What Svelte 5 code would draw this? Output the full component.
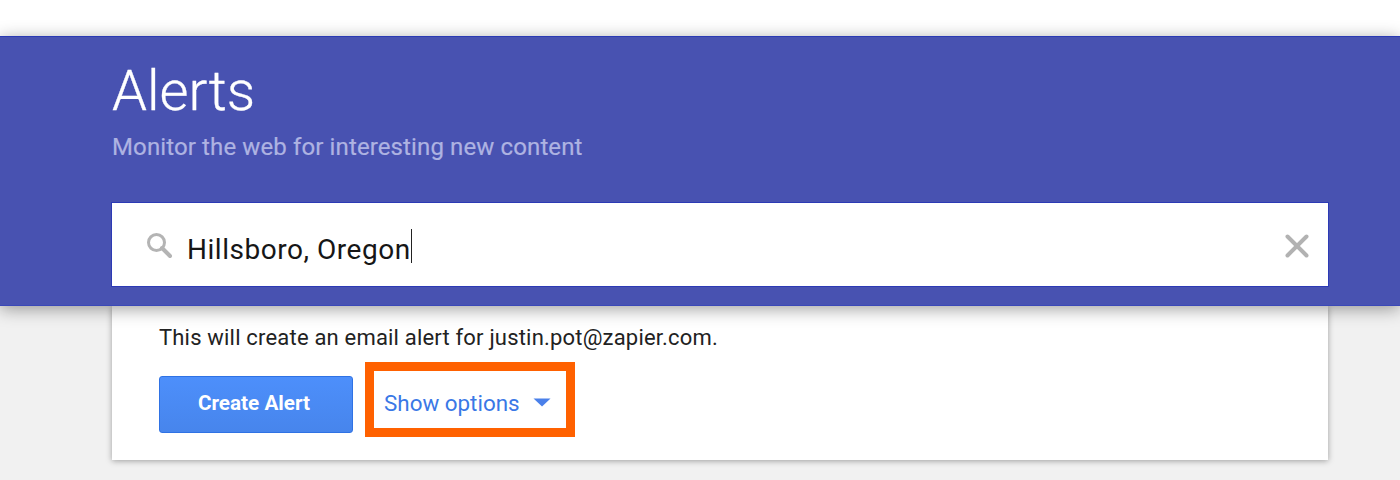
<script>
  const title = 'Alerts';
</script>

<div class="page">
  <div class="top"></div>
  <div class="main">
    <section class="panel">
      <p class="note">This will create an email alert for justin.pot@zapier.com.</p>
      <div class="actions">
        <button class="create">Create Alert</button>
        <div class="options">
          <span>Show options</span>
          <svg width="18" height="9" viewBox="0 0 18 9"><path d="M0.5 0.5H17.5L9 8.5Z" fill="#4a80ea"/></svg>
        </div>
      </div>
    </section>
  </div>
  <header class="hero">
    <h1>{title}</h1>
    <p class="sub">Monitor the web for interesting new content</p>
    <div class="search">
      <svg class="mag" width="28" height="28" viewBox="0 0 28 28" fill="none" stroke="#b4b4b4">
        <circle cx="11.5" cy="11.5" r="8" stroke-width="3"/>
        <path d="M17 17L25 25" stroke-width="4" stroke-linecap="round"/>
      </svg>
      <span class="query">Hillsboro, Oregon</span><span class="caret"></span>
      <svg class="clear" width="24" height="24" viewBox="0 0 24 24" fill="none" stroke="#b2b2b2" stroke-width="4" stroke-linecap="round">
        <path d="M2.5 2.5L21.5 21.5M21.5 2.5L2.5 21.5"/>
      </svg>
    </div>
  </header>
</div>

<style>
  :global(body) {
    margin: 0;
    background: #f1f1f1;
    font-family: Roboto, "Liberation Sans", sans-serif;
  }
  .page {
    position: relative;
    width: 1400px;
    height: 480px;
    overflow: hidden;
  }
  .top {
    height: 36px;
    background: #fff;
  }
  .hero {
    position: absolute;
    top: 36px;
    left: 0;
    right: 0;
    height: 270px;
    box-sizing: border-box;
    padding: 0 72px 0 112px;
    background: #4852b1;
    border-top: 1px solid #2a3ab4;
    border-bottom: 1px solid #3a48b8;
    box-shadow: 0 3px 16px rgba(0, 0, 0, 0.38);
  }
  h1 {
    margin: 0;
    padding-top: 21px;
    font-size: 56px;
    line-height: 66px;
    font-weight: 300;
    color: #fff;
    -webkit-text-stroke: 0.3px #fff;
  }
  .sub {
    margin: 9px 0 0;
    font-size: 24px;
    line-height: 28px;
    letter-spacing: 0.12px;
    color: #aeb3e2;
    -webkit-text-stroke: 0.2px #aeb3e2;
  }
  .search {
    display: flex;
    align-items: center;
    height: 83px;
    margin-top: 42px;
    box-sizing: border-box;
    padding: 0 19px 0 33px;
    background: #fff;
    box-shadow: 0 0 0 1px #2c3ab5;
    position: relative;
  }
  .mag {
    margin-right: 14px;
    margin-top: 1px;
  }
  .query {
    font-size: 28px;
    letter-spacing: 0.53px;
    color: #161616;
    margin-top: 9px;
  }
  .caret {
    width: 1.5px;
    height: 34px;
    background: #222;
    margin-left: 0;
    margin-top: 3px;
  }
  .clear {
    margin-left: auto;
    margin-top: 2px;
  }
  .main {
    padding: 270px 72px 0 112px;
  }
  .panel {
    height: 154px;
    box-sizing: border-box;
    padding: 19px 47px 0;
    background: #fff;
    box-shadow: 0 1px 6px rgba(0, 0, 0, 0.35);
  }
  .note {
    margin: 0;
    font-size: 22px;
    line-height: 26px;
    letter-spacing: 0.19px;
    color: #222;
  }
  .actions {
    display: flex;
    align-items: flex-start;
    margin-top: 11px;
  }
  .create {
    width: 194px;
    height: 57px;
    margin-top: 14px;
    padding: 0 4px 3px 0;
    border: 1px solid #2f72e4;
    border-radius: 3px;
    background: linear-gradient(#4d8ffb, #4785ec);
    color: #fff;
    font: 700 20.7px Roboto, sans-serif;
  }
  .options {
    display: flex;
    align-items: center;
    gap: 13px;
    width: 210px;
    height: 75px;
    margin-left: 12px;
    box-sizing: border-box;
    padding: 6px 0 0 10px;
    border: 9px solid #ff6100;
    color: #3a78e6;
    font-size: 22.4px;
  }
</style>
